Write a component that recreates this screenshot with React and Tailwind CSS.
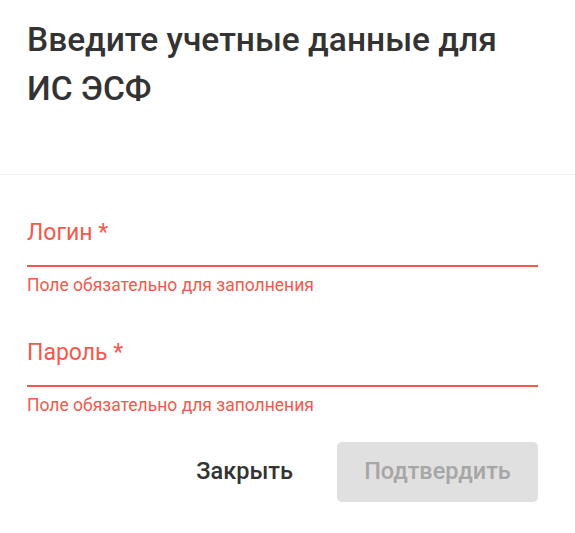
export default function App() {
  return (
    <div className="w-[575px] h-[533px] bg-white" style={{ fontFamily: "Roboto, 'Noto Sans', sans-serif" }}>
      <div className="px-[27px] pt-[15px] pb-[61px] border-b border-[#eeeeee]">
        <h2 className="w-[505px] text-[33.5px] leading-[49px] font-medium text-[#333333] m-0">
          Введите учетные данные для ИС ЭСФ
        </h2>
      </div>
      <div className="pl-[27px] pr-[37px] pt-[44px]">
        <div className="flex flex-col">
          <div className="h-[48px] border-b-2 border-[#f5584c] flex items-start">
            <span className="text-[23px] leading-[28px] text-[#f5584c]">Логин *</span>
          </div>
          <div className="text-[17.5px] leading-[20px] mt-[8px] text-[#f5584c]">Поле обязательно для заполнения</div>
        </div>
        <div className="flex flex-col mt-[44px]">
          <div className="h-[48px] border-b-2 border-[#f5584c] flex items-start">
            <span className="text-[23px] leading-[28px] text-[#f5584c]">Пароль *</span>
          </div>
          <div className="text-[17.5px] leading-[20px] mt-[8px] text-[#f5584c]">Поле обязательно для заполнения</div>
        </div>
        <div className="flex justify-end gap-[17px] mt-[27px]">
          <button className="h-[60px] px-[27px] text-[23.5px] font-medium text-[#333333] rounded-[4px] bg-transparent">
            Закрыть
          </button>
          <button disabled className="h-[60px] w-[201px] text-[23.5px] font-medium text-[#a6a6a6] rounded-[5px] bg-[#e0e0e0]">
            Подтвердить
          </button>
        </div>
      </div>
    </div>
  );
}
